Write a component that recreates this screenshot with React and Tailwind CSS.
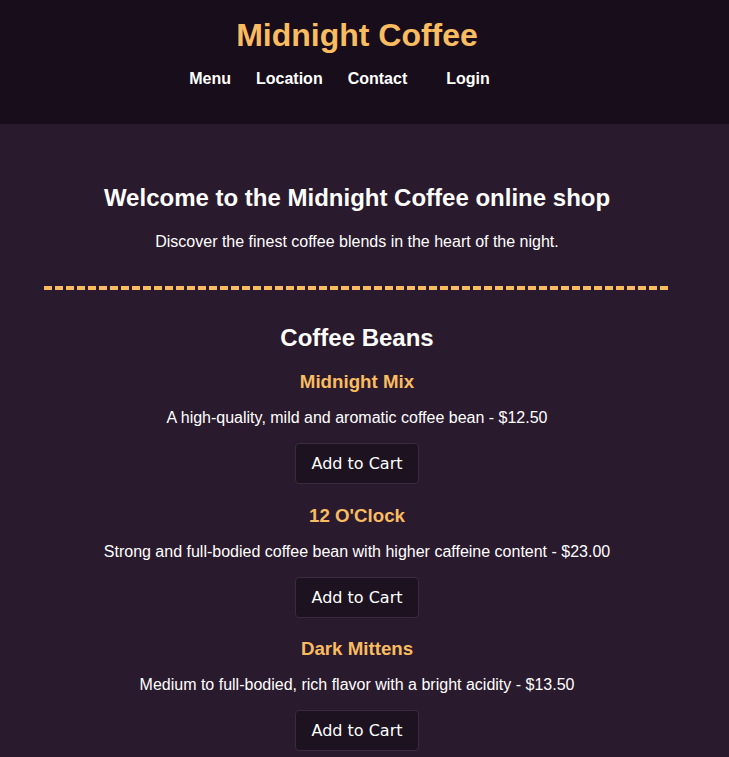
const products = [
  { name: "Midnight Mix", desc: "A high-quality, mild and aromatic coffee bean - $12.50" },
  { name: "12 O'Clock", desc: "Strong and full-bodied coffee bean with higher caffeine content - $23.00" },
  { name: "Dark Mittens", desc: "Medium to full-bodied, rich flavor with a bright acidity - $13.50" },
];

export default function App() {
  return (
    <div className="min-h-screen bg-[#2a1a2d] font-['Liberation_Sans',Arial,sans-serif] text-white">
      <div className="w-[714px]">
        <header className="bg-[#180d1a] pt-[17px] pb-[36px] text-center w-[729px]">
          <div className="w-[714px]">
            <h1 className="text-[32px] leading-[37px] font-bold text-[#f9bc60]">Midnight Coffee</h1>
            <nav className="mt-4 pr-[35px] flex justify-center text-base leading-[18px] font-bold">
              <a className="mx-[12.5px]">Menu</a>
              <a className="mx-[12.5px]">Location</a>
              <a className="mx-[12.5px]">Contact</a>
              <a className="ml-[26.5px] mr-[12.5px]">Login</a>
            </nav>
          </div>
        </header>

        <main className="pt-[60px] pb-8 text-center">
          <h2 className="text-2xl leading-[28px] font-bold">Welcome to the Midnight Coffee online shop</h2>
          <p className="mt-[21px] text-base leading-[18px]">Discover the finest coffee blends in the heart of the night.</p>
          <div className="mt-[35px] mx-[44px] h-[4px] bg-[repeating-linear-gradient(90deg,#f9bc60_0_8px,transparent_8px_11px)]" />
          <h2 className="mt-[34px] text-2xl leading-[28px] font-bold">Coffee Beans</h2>
          <div className="mt-[19px] flex flex-col items-center">
            {products.map((p, i) => (
              <div key={p.name} className={`flex flex-col items-center ${i > 0 ? "mt-[20.5px]" : ""}`}>
                <h3 className="text-[18.72px] leading-[22px] font-bold text-[#f9bc60]">{p.name}</h3>
                <p className="mt-4 text-base leading-[18px]">{p.desc}</p>
                <button className="mt-4 px-[15px] py-[10px] rounded bg-[#1d1220] border border-[#3b2b3f] font-['DejaVu_Sans',sans-serif] text-base leading-[19px] text-white">
                  Add to Cart
                </button>
              </div>
            ))}
          </div>
        </main>
      </div>
    </div>
  );
}
